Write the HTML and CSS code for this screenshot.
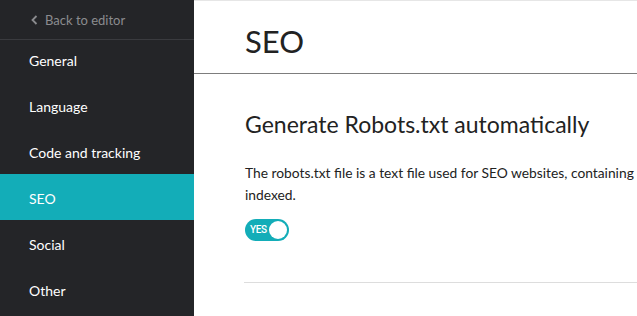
FILE: index.html
```html
<!DOCTYPE html>
<html>
<head>
    <title>Settings - SEO</title>
    <link rel="stylesheet" href="styles.css">
</head>
<body>
    <div class="app">
        <aside class="sidebar">
            <a class="back" href="#">
                <svg class="back-icon" width="7" height="10" viewBox="0 0 7 10"><path d="M5.5 1 L1.5 5 L5.5 9" fill="none" stroke="currentColor" stroke-width="1.8"/></svg>
                Back to editor
            </a>
            <nav class="nav">
                <a class="nav-item" href="#">General</a>
                <a class="nav-item" href="#">Language</a>
                <a class="nav-item" href="#">Code and tracking</a>
                <a class="nav-item active" href="#">SEO</a>
                <a class="nav-item" href="#">Social</a>
                <a class="nav-item" href="#">Other</a>
            </nav>
        </aside>

        <main class="main">
            <header class="page-header">
                <h1>SEO</h1>
            </header>

            <section class="setting">
                <h2>Generate Robots.txt automatically</h2>
                <p>The robots.txt file is a text file used for SEO websites, containing<br>indexed.</p>
                <label class="toggle on">
                    <span class="toggle-label">YES</span>
                    <span class="toggle-knob"></span>
                </label>
            </section>
        </main>
    </div>
</body>
</html>
```

FILE: styles.css
```css
body { margin: 0; overflow: hidden; font-family: Lato, "Open Sans", sans-serif; color: #222; background: #fff; }
a { text-decoration: none; color: inherit; }

.app { display: flex; min-height: 316px; }

/* sidebar */
.sidebar { width: 194px; flex-shrink: 0; background: #242528; color: #fff; }
.back { display: flex; align-items: center; gap: 7px; height: 39px; padding-left: 31px; border-bottom: 1px solid #3a3b3f; color: #8b8c8f; font-size: 13px; }
.back-icon { margin-top: 1px; }
.nav { display: flex; flex-direction: column; margin-top: -4px; }
.nav-item { display: flex; align-items: center; height: 46px; padding: 3px 0 0 29px; box-sizing: border-box; font-size: 14px; }
.nav-item.active { background: #13adb8; }

/* main */
.main { flex: 1; min-width: 0; border-top: 1px solid #e6e6e6; }
.page-header { height: 73px; border-bottom: 1px solid #7d7d7d; padding-left: 51px; box-sizing: border-box; display: flex; align-items: center; }
.page-header h1 { margin: 8px 0 0; font-size: 31px; font-weight: 400; }

.setting { margin-left: 50px; padding: 34px 0 41px 1px; border-bottom: 1px solid #ddd; }
.setting h2 { margin: 0 0 22px; font-size: 23px; font-weight: 400; line-height: 32px; }
.setting p { margin: 0 0 11px; font-size: 13.8px; line-height: 22px; white-space: nowrap; }

.toggle { display: inline-flex; align-items: center; justify-content: space-between; width: 44px; height: 22px; padding: 0 2px 0 5px; box-sizing: border-box; border-radius: 11px; background: #13adb8; }
.toggle-label { color: #fff; font-family: Roboto, sans-serif; font-size: 10px; font-weight: 500; letter-spacing: -0.4px; }
.toggle-knob { width: 18px; height: 18px; border-radius: 50%; background: #fff; }
```
